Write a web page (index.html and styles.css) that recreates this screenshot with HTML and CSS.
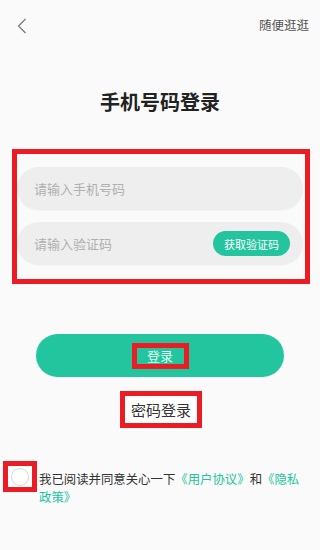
FILE: index.html
```html
<!DOCTYPE html>
<html lang="zh">
<head>
<meta charset="utf-8">
<link rel="stylesheet" href="styles.css">
</head>
<body>
<div class="page">
  <header class="topbar">
    <svg class="back" width="10" height="16" viewBox="0 0 10 16"><path d="M8.5 1 L1.5 8 L8.5 15" fill="none" stroke="#777" stroke-width="1.2"/></svg>
    <span class="skip">随便逛逛</span>
  </header>
  <h1 class="title">手机号码登录</h1>
  <div class="form mark">
    <div class="field"><span class="ph">请输入手机号码</span></div>
    <div class="field"><span class="ph">请输入验证码</span><span class="code-btn">获取验证码</span></div>
  </div>
  <div class="login-btn"><span class="login-text mark">登录</span></div>
  <div class="pwd-wrap"><span class="pwd mark">密码登录</span></div>
  <div class="agree">
    <span class="check mark"><span class="circle"></span></span>
    <p class="agree-text">我已阅读并同意关心一下<span class="link">《用户协议》</span>和<span class="link">《隐私政策》</span></p>
  </div>
</div>
</body>
</html>
```
FILE: styles.css
```css
* { box-sizing: border-box; }
html, body { margin: 0; padding: 0; }
body {
  background: #fafafa;
  font-family: "Noto Sans CJK SC", "Noto Sans", sans-serif;
  color: #333;
}
.page { width: 320px; height: 550px; overflow: hidden; }
.mark { border: 5px solid #ec1c24; }
.topbar {
  height: 50px;
  display: flex;
  justify-content: space-between;
  align-items: flex-start;
  padding: 0 11px 0 17px;
}
.back { margin-top: 18px; }
.skip { font-size: 12.5px; line-height: 18px; margin-top: 16px; color: #555; }
.title {
  margin: 38px 0 0;
  text-align: center;
  font-size: 20px;
  line-height: 28px;
  font-weight: 700;
  color: #222;
}
.form {
  margin: 33px 0 0 12px;
  width: 298px;
  height: 135px;
  padding: 13px 2px 0 0;
  display: flex;
  flex-direction: column;
  gap: 12px;
}
.field {
  height: 43px;
  flex-shrink: 0;
  border-radius: 22px;
  background: #eeeeee;
  display: flex;
  align-items: center;
  justify-content: space-between;
  padding: 0 13px 0 17px;
  box-shadow: 0 1px 0 #f4f4f4;
}
.ph { font-size: 13px; color: #b0b0b0; }
.code-btn {
  width: 77px;
  height: 25px;
  border-radius: 13px;
  background: #23c49e;
  color: #fff;
  font-size: 11px;
  display: flex;
  align-items: center;
  justify-content: center;
}
.login-btn {
  margin: 50px 0 0 36px;
  width: 248px;
  height: 43px;
  border-radius: 22px;
  background: #23c59f;
  display: flex;
  align-items: center;
  justify-content: center;
}
.login-text {
  width: 57px;
  height: 26px;
  display: flex;
  align-items: center;
  justify-content: center;
  color: #e6f8f2;
  font-size: 13px;
}
.pwd-wrap { display: flex; justify-content: center; margin-top: 14px; padding-left: 2px; }
.pwd {
  width: 82px;
  height: 37px;
  background: #fff;
  display: flex;
  align-items: center;
  justify-content: center;
  font-size: 15px;
  color: #333;
}
.agree {
  margin-top: 33px;
  display: flex;
  align-items: flex-start;
  padding-left: 3px;
}
.check {
  width: 34px;
  height: 31px;
  background: #fff;
  display: flex;
  align-items: center;
  justify-content: center;
  flex-shrink: 0;
}
.circle {
  width: 18px;
  height: 18px;
  border-radius: 50%;
  border: 1px solid #d6d6d6;
  background: #fff;
}
.agree-text {
  margin: 9px 0 0 2px;
  width: 268px;
  font-size: 12.4px;
  line-height: 18px;
  color: #333;
}
.link { color: #23c49e; }
```
